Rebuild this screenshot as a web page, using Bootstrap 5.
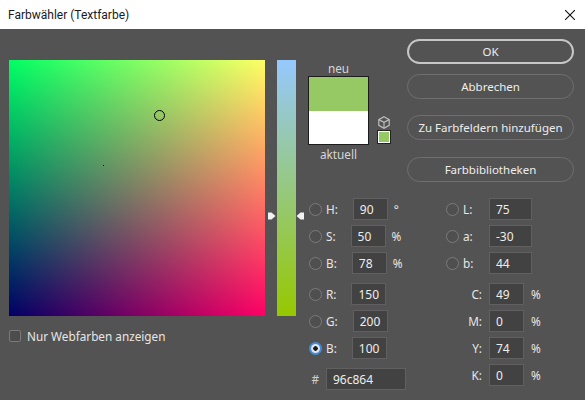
<!DOCTYPE html>
<html lang="de">
<head>
  <meta charset="UTF-8">
  <title>Farbwähler (Textfarbe)</title>
  <link href="https://cdn.jsdelivr.net/npm/bootstrap@5.3.3/dist/css/bootstrap.min.css" rel="stylesheet">
  <style>
    html, body { height: 400px; overflow: hidden; }
    body { background: #535353; color: #e6e6e6; font: 11.75px/16px "Noto Sans", sans-serif; }
    .titlebar { height: 29px; padding: 0 10px 0 8px; background: #fff; color: #1a1a1a; font: 12px/16px Roboto, sans-serif; }
    .dialog { padding: 10px 11px 0 9px; }

    .picker { margin-top: 21px; }
    .field { position: relative; width: 256px; height: 256px; background-image: linear-gradient(to top, #000, rgb(0,255,0)), linear-gradient(to right, rgb(0,0,100), rgb(255,0,100)); background-blend-mode: screen; }
    .ring { position: absolute; left: 145px; top: 50px; width: 11px; height: 11px; border: 1px solid #000; border-radius: 50%; }
    .speck { position: absolute; left: 94px; top: 105px; width: 1px; height: 1px; background: #000; }
    .web-row { margin-top: 13px; height: 13px; gap: 6px; }
    .web-row .form-check-input { width: 12px; height: 12px; margin: 0; background: #4c4c4c; border: 1px solid #7a7a7a; border-radius: 2px; }

    .slider { position: relative; width: 19px; height: 256px; margin: 21px 12px 0; background: linear-gradient(to bottom, rgb(150,200,255), rgb(150,200,0)); }
    .tick { position: absolute; top: 152px; width: 9px; height: 8px; }
    .tick-l { left: -10px; }
    .tick-r { right: -9px; }

    .preview-col { width: 61px; margin-top: 21px; color: #d6d6d6; }
    .neu { padding-top: 1px; line-height: 15px; }
    .aktuell { padding-top: 1px; }
    .preview { height: 69px; border: 1px solid #1c1c1c; }
    .preview > div { height: 50%; }
    .new-c { background: #96c864; }
    .old-c { background: #fff; }
    .gamut { width: 14px; margin: 77px 0 0 8px; }
    .cube { display: block; width: 12px; height: 13px; margin-left: 1px; }
    .small-swatch { width: 14px; height: 14px; margin-top: 1px; background: #96c864; border: 2px solid #fff; outline: 1px solid #222; outline-offset: -1px; }

    .actions { width: 167px; margin-left: auto; }
    .actions .btn { height: 25px; padding: 0; font-size: 11.5px; line-height: 23px; color: #ededed; background: transparent; border: 1px solid #6f6f6f; border-radius: 12.5px; }
    .actions .btn-ok { border: 2px solid #c6c6c6; line-height: 21px; margin-bottom: 10px; }
    .actions .gap-big { margin-top: 16px; }
    .actions .gap-mid { margin-top: 17px; }

    .values { margin-top: 16px; padding-left: 1px; }
    .rgb-col { width: 137px; }
    .vrow { height: 22px; margin-bottom: 5px; }
    .vgroup { margin-bottom: 9px; }
    .form-check-input.rd { flex: none; width: 13px; height: 13px; margin: 0 4px 0 0; background: #4f4f4f; border: 1px solid #7c7c7c; border-radius: 50%; }
    .form-check-input.rd:checked { background-image: radial-gradient(circle, #1a1a1a 0 2px, #e4e4e4 2.5px); border: 2px solid #3f8fe0; }
    .nm { margin-right: 15px; }
    .vrow .form-control { flex: none; width: 35px; height: 22px; min-height: 0; padding: 0 6px; font-size: 12px; line-height: 20px; color: #ededed; background: #424242; border: 1px solid #606060; border-radius: 0; }
    .unit { margin-left: 6px; }
    .hash { width: 10px; margin-right: 7px; text-align: right; color: #cfcfcf; }
    .vrow .hex { width: 80px; }
    .vrow .wide { width: 43px; }
    .lab-name { width: 26px; }
    .cmyk-name { width: 36px; margin-right: 7px; text-align: right; }
    .cmyk-unit { margin-left: 7px; }
  </style>
</head>
<body>
  <div class="titlebar d-flex align-items-center justify-content-between">
    <span>Farbwähler (Textfarbe)</span>
    <svg width="10" height="10" viewBox="0 0 10 10"><path d="M0 0L10 10M10 0L0 10" stroke="#111" stroke-width="1.1" fill="none"/></svg>
  </div>

  <div class="dialog d-flex">
    <div class="picker">
      <div class="field"><span class="ring"></span><span class="speck"></span></div>
      <div class="web-row d-flex align-items-center">
        <input class="form-check-input" type="checkbox" id="webOnly">
        <label for="webOnly">Nur Webfarben anzeigen</label>
      </div>
    </div>

    <div class="slider">
      <svg class="tick tick-l" viewBox="0 0 9 8"><path d="M1 0.5H4.5L8.5 4L4.5 7.5H1Z" fill="#f2f2f2"/></svg>
      <svg class="tick tick-r" viewBox="0 0 9 8"><path d="M8 0.5H4.5L0.5 4L4.5 7.5H8Z" fill="#f2f2f2"/></svg>
    </div>

    <div class="flex-grow-1">
      <div class="d-flex">
        <div class="preview-col text-center">
          <div class="neu">neu</div>
          <div class="preview"><div class="new-c"></div><div class="old-c"></div></div>
          <div class="aktuell">aktuell</div>
        </div>
        <div class="gamut align-self-start">
          <svg class="cube" viewBox="0 0 12 13" fill="none" stroke="#bdbdbd" stroke-width="1.2"><path d="M6 0.8L11.2 3.6V9.4L6 12.2L0.8 9.4V3.6Z"/><path d="M0.8 3.6L6 6.4L11.2 3.6M6 6.4V12.2"/></svg>
          <div class="small-swatch"></div>
        </div>
        <div class="actions d-flex flex-column">
          <button type="button" class="btn btn-ok">OK</button>
          <button type="button" class="btn">Abbrechen</button>
          <button type="button" class="btn gap-big">Zu Farbfeldern hinzufügen</button>
          <button type="button" class="btn gap-mid">Farbbibliotheken</button>
        </div>
      </div>

      <div class="values d-flex">
        <div class="rgb-col">
          <div class="vgroup">
            <div class="vrow d-flex align-items-center"><input class="form-check-input rd" type="radio" name="ch"><span class="nm">H:</span><input class="form-control" value="90"><span class="unit">°</span></div>
            <div class="vrow d-flex align-items-center"><input class="form-check-input rd" type="radio" name="ch"><span class="nm">S:</span><input class="form-control" value="50"><span class="unit">%</span></div>
            <div class="vrow d-flex align-items-center"><input class="form-check-input rd" type="radio" name="ch"><span class="nm">B:</span><input class="form-control" value="78"><span class="unit">%</span></div>
          </div>
          <div class="vgroup">
            <div class="vrow d-flex align-items-center"><input class="form-check-input rd" type="radio" name="ch"><span class="nm">R:</span><input class="form-control" value="150"></div>
            <div class="vrow d-flex align-items-center"><input class="form-check-input rd" type="radio" name="ch"><span class="nm">G:</span><input class="form-control" value="200"></div>
            <div class="vrow d-flex align-items-center"><input class="form-check-input rd" type="radio" name="ch" checked><span class="nm">B:</span><input class="form-control" value="100"></div>
          </div>
          <div class="vrow d-flex align-items-center"><span class="hash">#</span><input class="form-control hex" value="96c864"></div>
        </div>
        <div>
          <div class="vgroup">
            <div class="vrow d-flex align-items-center"><input class="form-check-input rd" type="radio" name="ch"><span class="lab-name">L:</span><input class="form-control wide" value="75"></div>
            <div class="vrow d-flex align-items-center"><input class="form-check-input rd" type="radio" name="ch"><span class="lab-name">a:</span><input class="form-control wide" value="-30"></div>
            <div class="vrow d-flex align-items-center"><input class="form-check-input rd" type="radio" name="ch"><span class="lab-name">b:</span><input class="form-control wide" value="44"></div>
          </div>
          <div class="vrow d-flex align-items-center"><span class="cmyk-name">C:</span><input class="form-control" value="49"><span class="cmyk-unit">%</span></div>
          <div class="vrow d-flex align-items-center"><span class="cmyk-name">M:</span><input class="form-control" value="0"><span class="cmyk-unit">%</span></div>
          <div class="vrow d-flex align-items-center"><span class="cmyk-name">Y:</span><input class="form-control" value="74"><span class="cmyk-unit">%</span></div>
          <div class="vrow d-flex align-items-center"><span class="cmyk-name">K:</span><input class="form-control" value="0"><span class="cmyk-unit">%</span></div>
        </div>
      </div>
    </div>
  </div>
</body>
</html>
